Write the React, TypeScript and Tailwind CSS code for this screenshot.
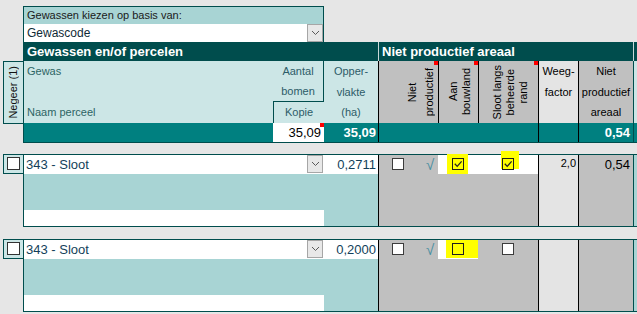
import React from 'react';

type Mark = { left: number; top: number; width: number; height: number };

interface RowData {
  area: string;
  aanChecked: boolean;
  aanMark: Mark;
  slootBand: boolean;
  slootChecked: boolean;
  slootMark?: Mark;
  weeg?: string;
  npa?: string;
}

const rows: RowData[] = [
  {
    area: '0,2711',
    aanChecked: true,
    aanMark: { left: 9, top: -1, width: 21, height: 20 },
    slootBand: true,
    slootChecked: true,
    slootMark: { left: 23, top: -4, width: 18, height: 18 },
    weeg: '2,0',
    npa: '0,54',
  },
  {
    area: '0,2000',
    aanChecked: false,
    aanMark: { left: 8, top: 0, width: 32, height: 18 },
    slootBand: false,
    slootChecked: false,
  },
];

function DropBtn() {
  return (
    <div className="w-[16px] h-[18px] border border-[#a6a6a6] bg-[#e8e8e8] flex items-center justify-center shrink-0">
      <svg width="9" height="6" viewBox="0 0 9 6">
        <path d="M1 1 L4.5 4.5 L8 1" fill="none" stroke="#5a5a5a" strokeWidth="1" />
      </svg>
    </div>
  );
}

function Box({ checked = false, clear = false }: { checked?: boolean; clear?: boolean }) {
  return (
    <span
      className={`relative block w-[12px] h-[12px] border ${
        clear ? 'border-[#1e1e1e] bg-transparent' : 'border-[#3c3c3c] bg-white'
      }`}
    >
      {checked && (
        <svg className="absolute left-0 top-0" width="10" height="10" viewBox="0 0 10 10">
          <path d="M1.8 4.8 L4.2 7.4 L8.6 2.4" fill="none" stroke="#222" strokeWidth="1.3" />
        </svg>
      )}
    </span>
  );
}

function RedTip() {
  return <span className="absolute top-0 right-0 w-[4px] h-[4px] bg-[#ff0000]" />;
}

function Row({ r }: { r: RowData }) {
  return (
    <div className="flex items-start">
      <div className="w-[3px]" />
      <div className="w-[20px] h-[20px] border-l border-y border-[#004d4d] bg-[#cce6e6] pl-[3px] pt-[2px]">
        <span className="block w-[13px] h-[13px] border border-[#333] bg-white" />
      </div>
      <div className="w-[614px] h-[73px] border-l border-y border-[#004d4d] flex">
        {/* gewas + oppervlakte */}
        <div className="w-[354px] flex flex-col">
          <div className="h-[19px] flex bg-white">
            <div className="w-[283px] pl-[2px] text-[13px] leading-[19px] text-[#133f5a]">343 - Sloot</div>
            <DropBtn />
            <div className="w-[55px] pr-[2px] text-right text-[13px] leading-[19px] text-[#133f5a]">{r.area}</div>
          </div>
          <div className="h-[36px] bg-[#a8d4d4]" />
          <div className="h-[16px] flex">
            <div className="w-[300px] bg-white" />
            <div className="flex-1 bg-[#a8d4d4]" />
          </div>
        </div>

        {/* niet productief / aan bouwland / sloot */}
        <div className="w-[160px] border-l border-black bg-[#c0c0c0] flex items-start">
          <div className="w-[59px] h-[19px] flex items-start pt-[3px] pl-[13px]">
            <Box />
            <span className="ml-[22px] text-[15px] leading-[13px] text-[#4a8fa0]">√</span>
          </div>
          <div className="relative w-[40px] h-[19px] bg-white">
            <span
              className="absolute bg-[#ffff00]"
              style={{ left: r.aanMark.left, top: r.aanMark.top, width: r.aanMark.width, height: r.aanMark.height }}
            />
            <div className="absolute left-[14px] top-[3px]">
              <Box checked={r.aanChecked} clear />
            </div>
          </div>
          <div className={`relative w-[60px] h-[19px] ${r.slootBand ? 'bg-white' : ''}`}>
            {r.slootMark && (
              <span
                className="absolute bg-[#ffff00]"
                style={{
                  left: r.slootMark.left,
                  top: r.slootMark.top,
                  width: r.slootMark.width,
                  height: r.slootMark.height,
                }}
              />
            )}
            <div className="absolute left-[24px] top-[3px]">
              <Box checked={r.slootChecked} clear={!!r.slootMark} />
            </div>
          </div>
        </div>

        {/* weegfactor */}
        <div className="w-[40px] border-l border-black bg-[#e4e4e4] pr-[2px] pt-[1px] text-right text-[11px] leading-[14px]">
          {r.weeg}
        </div>
        {/* niet productief areaal */}
        <div className="w-[55px] border-l border-black bg-[#c0c0c0] pr-[3px] text-right text-[13px] leading-[19px]">
          {r.npa}
        </div>
        <div className="w-[4px] border-l border-[#004d4d] bg-[#a8d4d4]" />
      </div>
    </div>
  );
}

export default function App() {
  return (
    <div className="w-[637px] h-[314px] overflow-hidden bg-[#e6e6e6] font-['Liberation_Sans',Arial,sans-serif] text-black">
      <div className="h-[6px]" />

      {/* keuze basis */}
      <div className="ml-[23px] w-[301px] border-x border-t border-[#004d4d]">
        <div className="h-[17px] bg-[#a8d4d4] pl-[3px] text-[11px] leading-[17px] text-[#1a1a1a]">
          Gewassen kiezen op basis van:
        </div>
        <div className="h-[18px] flex bg-white">
          <div className="flex-1 pl-[3px] text-[12px] leading-[18px] text-[#0f2a36]">Gewascode</div>
          <DropBtn />
        </div>
      </div>

      {/* titelbalk */}
      <div className="ml-[23px] w-[614px] h-[19px] bg-[#004d4d] flex text-white font-bold text-[13px] leading-[19px]">
        <div className="w-[355px] pl-[4px]">Gewassen en/of percelen</div>
        <div className="w-[255px] border-l border-[#c8d8d8] pl-[3px]">Niet productief areaal</div>
        <div className="flex-1 border-l border-[#c8d8d8]" />
      </div>

      {/* kolomkoppen */}
      <div className="flex items-start">
        <div className="w-[3px]" />
        <div className="w-[20px] h-[63px] border-l border-y border-[#004d4d] bg-[#cce6e6] flex items-center justify-center">
          <span className="[writing-mode:vertical-rl] rotate-180 whitespace-nowrap text-[11px] leading-[13px] text-[#111]">
            Negeer (1)
          </span>
        </div>
        <div className="w-[614px] border-l border-b border-[#004d4d]">
          <div className="h-[62px] flex text-[11px]">
            <div className="w-[249px] bg-[#cce6e6] pl-[3px] flex flex-col justify-between text-[#2d6464]">
              <div className="h-[21px] leading-[21px]">Gewas</div>
              <div className="h-[21px] leading-[21px]">Naam perceel</div>
            </div>
            <div className="w-[51px] bg-[#cce6e6] flex flex-col text-[#2d5c68]">
              <div className="h-[41px] border-r border-b border-[#004d4d] text-center">
                <div className="h-[20px] leading-[20px]">Aantal</div>
                <div className="h-[20px] leading-[20px]">bomen</div>
              </div>
              <div className="h-[21px] border-l border-[#004d4d] text-center leading-[21px]">Kopie</div>
            </div>
            <div className="w-[54px] bg-[#cce6e6] text-center text-[#2d5c68]">
              <div className="h-[21px] leading-[21px]">Opper-</div>
              <div className="h-[20px] leading-[20px]">vlakte</div>
              <div className="h-[21px] leading-[21px]">(ha)</div>
            </div>
            <div className="relative w-[60px] border-l border-black bg-[#c0c0c0] flex items-center justify-end">
              <div className="[writing-mode:vertical-rl] rotate-180 text-center leading-[17px] whitespace-nowrap">
                Niet
                <br />
                productief
              </div>
              <RedTip />
            </div>
            <div className="relative w-[40px] border-l border-black bg-[#c0c0c0] flex items-center justify-end pr-[5px]">
              <div className="[writing-mode:vertical-rl] rotate-180 text-center leading-[13px] whitespace-nowrap">
                Aan
                <br />
                bouwland
              </div>
              <RedTip />
            </div>
            <div className="relative w-[60px] border-l border-black bg-[#c0c0c0] flex items-center justify-end pr-[8px]">
              <div className="[writing-mode:vertical-rl] rotate-180 text-center leading-[13px] whitespace-nowrap">
                Sloot langs
                <br />
                beheerde
                <br />
                rand
              </div>
              <RedTip />
            </div>
            <div className="w-[40px] border-l border-black bg-[#e4e4e4] text-center">
              <div className="h-[21px] leading-[21px]">Weeg-</div>
              <div className="h-[20px] leading-[20px]">factor</div>
            </div>
            <div className="w-[55px] border-l border-black bg-[#c0c0c0] text-center">
              <div className="h-[21px] leading-[21px]">Niet</div>
              <div className="h-[20px] leading-[20px]">productief</div>
              <div className="h-[21px] leading-[21px]">areaal</div>
            </div>
            <div className="w-[4px] border-l border-[#004d4d] bg-[#cce6e6]" />
          </div>

          {/* totalen */}
          <div className="h-[19px] flex bg-[#008080] text-[13px] leading-[19px]">
            <div className="w-[249px]" />
            <div className="relative w-[51px] bg-white pr-[3px] text-right">
              35,09
              <RedTip />
            </div>
            <div className="w-[54px] pr-[2px] text-right font-bold text-white">35,09</div>
            <div className="w-[160px] border-l border-black" />
            <div className="w-[40px] border-l border-black" />
            <div className="w-[55px] border-l border-black pr-[3px] text-right font-bold text-white">0,54</div>
            <div className="w-[4px] border-l border-[#004d4d]" />
          </div>
        </div>
      </div>

      <div className="h-[11px]" />
      <div className="flex flex-col gap-[12px]">
        {rows.map((r, i) => (
          <Row key={i} r={r} />
        ))}
      </div>
    </div>
  );
}
